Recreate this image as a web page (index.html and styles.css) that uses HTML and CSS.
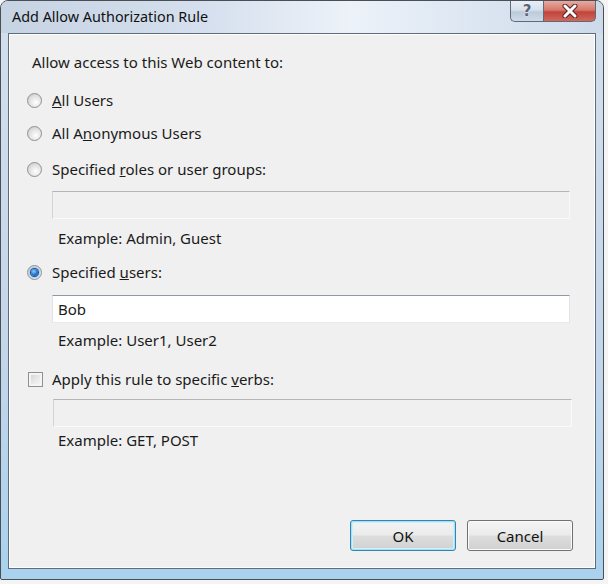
FILE: index.html
```html
<!DOCTYPE html>
<html>
<head>
<meta charset="utf-8">
<link rel="stylesheet" href="styles.css">
</head>
<body>
<div class="window">
  <div class="titlebar">
    <span class="title">Add Allow Authorization Rule</span>
    <div class="caption-buttons">
      <div class="cbtn help">?</div>
      <div class="cbtn close">
        <svg width="18" height="14" viewBox="0 0 18 14">
          <path d="M4 2 L14 12 M14 2 L4 12" stroke="#5a2020" stroke-width="5" stroke-linecap="round"/>
          <path d="M4 2 L14 12 M14 2 L4 12" stroke="#ffffff" stroke-width="3" stroke-linecap="round"/>
        </svg>
      </div>
    </div>
  </div>
  <div class="client">
    <div class="content">
      <div class="heading">Allow access to this Web content to:</div>
      <div class="option opt1"><span class="radio"></span><span class="label"><u>A</u>ll Users</span></div>
      <div class="option opt2"><span class="radio"></span><span class="label">All A<u>n</u>onymous Users</span></div>
      <div class="option opt3"><span class="radio"></span><span class="label">Specified <u>r</u>oles or user groups:</span></div>
      <div class="textbox disabled in1"></div>
      <div class="example ex1">Example: Admin, Guest</div>
      <div class="option opt4"><span class="radio checked"></span><span class="label">Specified <u>u</u>sers:</span></div>
      <div class="textbox in2">Bob</div>
      <div class="example ex2">Example: User1, User2</div>
      <div class="option opt5"><span class="checkbox"></span><span class="label">Apply this rule to specific <u>v</u>erbs:</span></div>
      <div class="textbox disabled in3"></div>
      <div class="example ex3">Example: GET, POST</div>
    </div>
    <div class="buttons">
      <div class="btn default">OK</div>
      <div class="btn">Cancel</div>
    </div>
  </div>
</div>
</body>
</html>
```

FILE: styles.css
```css
html, body {
  margin: 0;
  padding: 0;
  background: #f4f4f4;
}
body {
  width: 608px;
  height: 584px;
  overflow: hidden;
  font-family: "Noto Sans", "Open Sans", sans-serif;
  font-size: 15px;
  color: #1a1a1a;
}
.window {
  width: 604px;
  height: 580px;
  box-sizing: border-box;
  border: 1px solid #4a4f55;
  border-radius: 8px 8px 2px 2px;
  background: linear-gradient(to bottom, #d3dfec 0%, #c4d6ea 60%, #a9d2ee 100%);
  display: flex;
  flex-direction: column;
}
.titlebar {
  height: 32px;
  flex: none;
  display: flex;
  justify-content: space-between;
  align-items: flex-start;
  border-radius: 7px 7px 0 0;
  background: linear-gradient(to right, #c6d3e3 0%, #d6e0ee 35%, #edf2f9 58%, #dfe8f3 75%, #cddaea 100%);
}
.title {
  margin-left: 11px;
  margin-top: 6px;
  line-height: 20px;
  font-size: 14.4px;
  color: #111;
}
.caption-buttons {
  display: flex;
  margin-right: 7px;
}
.cbtn {
  height: 21px;
  box-sizing: border-box;
  border: 1px solid #5f6a78;
  border-top: none;
  display: flex;
  align-items: center;
  justify-content: center;
}
.help {
  width: 33px;
  border-radius: 0 0 0 5px;
  border-right: none;
  background: linear-gradient(to bottom, #e8eef6 0%, #d6e0ec 45%, #bccadb 55%, #cfdbe8 100%);
  color: #56657a;
  font-family: "DejaVu Sans", sans-serif;
  font-weight: bold;
  font-size: 15px;
  text-shadow: 0 0 2px #ffffff;
}
.close {
  width: 53px;
  border-radius: 0 0 5px 0;
  background: linear-gradient(to bottom, #e7aaa0 0%, #d7786c 45%, #c1443a 55%, #d0685c 100%);
}
.client {
  margin: 0 7px 10px 7px;
  flex: 1;
  border: 1px solid #5d6b7a;
  box-shadow: inset 1px 1px 0 #ffffff, inset -1px -1px 0 #ffffff;
  background: #f0f0f0;
  display: flex;
  flex-direction: column;
  justify-content: space-between;
}
.content {
  display: flex;
  flex-direction: column;
  padding-top: 18px;
}
.heading {
  margin-left: 23px;
  line-height: 20px;
}
.option {
  display: flex;
  align-items: center;
  height: 20px;
  margin-left: 18px;
}
.label {
  margin-left: 10px;
  line-height: 20px;
}
.radio {
  width: 15px;
  height: 15px;
  box-sizing: border-box;
  border-radius: 50%;
  border: 1px solid #8d9196;
  background: radial-gradient(circle at 60% 65%, #ffffff 0%, #e6e6e6 45%, #c4c4c4 100%);
  display: flex;
  align-items: center;
  justify-content: center;
}
.radio.checked::after {
  content: "";
  width: 7px;
  height: 7px;
  border-radius: 50%;
  background: radial-gradient(circle at 40% 35%, #8fd0ff 0%, #2a7bd0 50%, #0c3d85 100%);
  box-shadow: 0 0 0 1px #1f4f8c, 0 0 2px 2px #9cc6ec;
}
.checkbox {
  width: 15px;
  height: 15px;
  box-sizing: border-box;
  border: 1px solid #8d9196;
  background: linear-gradient(135deg, #cfcfcf 0%, #e8e8e8 50%, #f8f8f8 100%);
  box-shadow: inset 0 0 0 2px #f4f4f4;
}
.opt1 { margin-top: 18px; }
.opt2 { margin-top: 13px; }
.opt3 { margin-top: 16px; }
.opt4 { margin-top: 14px; }
.opt5 { margin-top: 19px; margin-left: 19px; }
.opt5 .label { margin-left: 9px; }
.textbox {
  margin-left: 43px;
  width: 518px;
  height: 28px;
  box-sizing: border-box;
  border: 1px solid #e2e3ea;
  border-top-color: #8f9aa6;
  border-bottom-color: #e3e9ef;
  background: #ffffff;
  padding-left: 5px;
  line-height: 26px;
}
.textbox.disabled {
  background: #f0f0f0;
  border-color: #d4d4d4;
  border-top-color: #b5b5b5;
  border-right-color: #fafafa;
  border-bottom-color: #fafafa;
}
.in1 { margin-top: 12px; }
.in2 { margin-top: 13px; }
.in3 { margin-top: 10px; margin-left: 44px; width: 519px; }
.example {
  margin-left: 49px;
  line-height: 20px;
}
.ex1 { margin-top: 9px; }
.ex2 { margin-top: 7px; }
.ex3 { margin-top: 3px; }
.buttons {
  display: flex;
  justify-content: flex-end;
  gap: 11px;
  padding: 0 22px 17px 0;
}
.btn {
  width: 106px;
  height: 31px;
  box-sizing: border-box;
  border: 1px solid #707070;
  border-radius: 3px;
  background: linear-gradient(to bottom, #f4f4f4 0%, #ebebeb 48%, #dddddd 52%, #d1d1d1 100%);
  box-shadow: inset 0 0 0 1px #fcfcfc;
  display: flex;
  align-items: center;
  justify-content: center;
  color: #111;
}
.btn.default {
  border-color: #3c7fb1;
  box-shadow: inset 0 0 0 1px #9fe4f7, inset 0 0 0 2px #cdf1fb;
}
```
